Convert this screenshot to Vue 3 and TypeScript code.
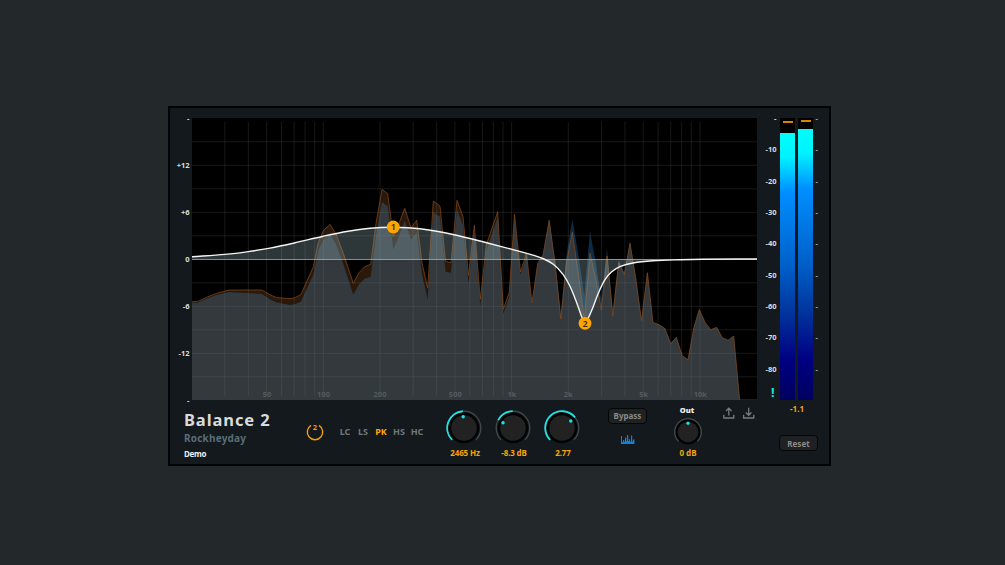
<script setup lang="ts">
type Point = [number, number]

const left = 192
const right = 757
const bottom = 400
const zeroY = 259.3

const decades = [10, 100, 1000, 10000]
const gridX = decades
  .flatMap((d) => [1, 2, 3, 4, 5, 6, 7, 8, 9].map((n) => n * d))
  .filter((f) => f > 20 && f <= 10000)
  .map((f) => 323.3 + 188.3 * Math.log10(f / 100))
const gridY = Array.from({ length: 11 }, (_, i) => 141.8 + i * 23.5)

const freqLabels = [
  { x: 267, text: '50' },
  { x: 323.5, text: '100' },
  { x: 380, text: '200' },
  { x: 455.3, text: '500' },
  { x: 512, text: '1k' },
  { x: 568.3, text: '2k' },
  { x: 643.7, text: '5k' },
  { x: 700.3, text: '10k' },
]

const curve: Point[] = [
  [191.7, 256.8], [225, 254.4], [248.3, 251.6], [270, 248.1], [295, 242.8], [323.3, 236.2],
  [348, 231.2], [370, 228.3], [393, 227.3], [420, 228.8], [453, 234.5], [486.7, 242.8],
  [516.7, 250.6], [532, 254.8], [543.3, 258.7], [553.3, 264.3], [563, 274.3], [570, 286.3],
  [576.7, 302.7], [582.2, 318], [585, 321.5], [588, 318.5], [592.5, 308.5], [598.3, 293.3],
  [605, 279.6], [611.7, 271.7], [620, 266.6], [633, 263], [653, 260.8], [680, 259.7],
  [703, 259.2], [757, 259],
]

const output: Point[] = [
  [191.7, 301.7], [197.7, 301.5], [206.7, 297.3], [216.7, 293.3], [229, 290], [261.7, 290],
  [271, 295.3], [276.7, 297.5], [290, 298.7], [295, 297.7], [301, 294.3], [313.3, 266.7],
  [318.3, 242.3], [323.3, 230.7], [330, 224.3], [336, 234], [343.3, 253.3], [353.3, 283.3],
  [359, 272.7], [364.7, 266.7], [370.7, 264.3], [376, 223.3], [382, 189.3], [387.7, 193.7],
  [393.3, 236.7], [399.3, 222.7], [404.7, 208.3], [411, 227.7], [416.7, 220.3], [422, 263],
  [427.7, 287.7], [433.3, 201], [440, 206], [445.5, 261.3], [451, 262.7], [457, 200.3],
  [463, 216.7], [468.5, 275.3], [474.3, 225.3], [480.3, 299.3], [486.3, 245], [492, 228],
  [497.7, 211.7], [503.3, 309.3], [509.3, 292.3], [514.5, 214.3], [520.5, 272], [526.5, 253.3],
  [532, 302.7], [537.7, 263.3], [543, 255], [549.2, 220.3], [555, 263], [560.8, 319],
  [566.5, 263], [572.3, 232.3], [578.5, 275], [584.3, 320], [590, 253.3], [596, 280],
  [601.3, 310], [607, 256], [612.8, 315.7], [618.7, 262.7], [624.3, 274.7], [630, 243.3],
  [635.5, 276.7], [641.5, 320.7], [647.4, 272.7], [653, 322.7], [659, 324.7], [665, 328.7],
  [670.7, 343.7], [676.3, 337.3], [682.3, 355.7], [688, 359.7], [693.7, 328.3], [699.3, 309.5],
  [705, 322.3], [710.7, 329.7], [716.7, 327.3], [722.3, 337.7], [728, 340.3], [733.7, 336],
  [739.7, 400],
]

function curveAt(x: number): number {
  const i = Math.max(1, curve.findIndex((p) => p[0] >= x))
  const [x0, y0] = curve[i - 1]
  const [x1, y1] = curve[i]
  return y0 + ((y1 - y0) * (x - x0)) / (x1 - x0)
}

function line(points: Point[]): string {
  return 'M' + points.map(([x, y]) => `${x.toFixed(1)} ${y.toFixed(1)}`).join('L')
}

function smooth(p: Point[]): string {
  let d = `M${p[0][0]} ${p[0][1]}`
  for (let i = 0; i < p.length - 1; i++) {
    const a = p[Math.max(0, i - 1)]
    const b = p[i]
    const c = p[i + 1]
    const e = p[Math.min(p.length - 1, i + 2)]
    const h = (c[0] - b[0]) / 3
    const m0 = (c[1] - a[1]) / (c[0] - a[0])
    const m1 = (e[1] - b[1]) / (e[0] - b[0])
    d += `C${b[0] + h} ${b[1] + m0 * h} ${c[0] - h} ${c[1] - m1 * h} ${c[0]} ${c[1]}`
  }
  return d
}

// The spectrum is plotted at 0.4 of the gain curve's vertical scale.
const input: Point[] = output.map(([x, y]) => [x, Math.min(bottom, y + 0.4 * (zeroY - curveAt(x)))])
const close = `L739.7 ${bottom}L${left} ${bottom}Z`
const outputArea = line(output) + close
const inputArea = line(input) + close
const curvePath = smooth(curve)
const curveArea = `${curvePath}L${right} ${zeroY}L${left} ${zeroY}Z`

const gainLabels = ['-', '+12', '+6', '0', '-6', '-12', '-']
const meterLabels = ['-', '-10', '-20', '-30', '-40', '-50', '-60', '-70', '-80', '']

const filters = ['LC', 'LS', 'PK', 'HS', 'HC']
const activeFilter = 'PK'

function polar(deg: number, r: number): string {
  const a = (deg * Math.PI) / 180
  return `${(18 + r * Math.sin(a)).toFixed(2)} ${(18 - r * Math.cos(a)).toFixed(2)}`
}
function arc(from: number, to: number, r: number): string {
  return `M${polar(from, r)}A${r} ${r} 0 ${to - from > 180 ? 1 : 0} 1 ${polar(to, r)}`
}
const knobs = [
  { label: '2465 Hz', angle: -4, dot: [17.2, 6.8] },
  { label: '-8.3 dB', angle: -62, dot: [8, 12.8], arcTo: -1 },
  { label: '2.77', angle: 51, dot: [26.8, 11] },
].map((k) => ({ ...k, from: k.arcTo === undefined ? -135 : k.angle, to: k.arcTo ?? k.angle }))
</script>

<template>
  <main class="desktop">
    <section class="panel">
      <div class="main">
        <div class="graph">
          <div class="axis gain">
            <span v-for="(l, i) in gainLabels" :key="i">{{ l }}</span>
          </div>
          <svg class="plot" viewBox="192 118 565 282" width="565" height="282">
            <defs>
              <clipPath id="outputClip"><path :d="outputArea" /></clipPath>
            </defs>
            <rect x="192" y="118" width="565" height="282" fill="#000" />
            <path :d="outputArea" fill="#2a190b" />
            <path :d="inputArea" fill="#0d2c44" />
            <path :d="inputArea" fill="#33393d" clip-path="url(#outputClip)" />
            <path :d="line(output) + 'L757 400'" class="output-line" />
            <g class="grid">
              <line v-for="x in gridX" :key="x" :x1="x" :x2="x" y1="122" y2="396" />
              <line v-for="y in gridY" :key="y" x1="192" x2="757" :y1="y" :y2="y" />
            </g>
            <text v-for="f in freqLabels" :key="f.text" :x="f.x" y="397" class="freq">{{ f.text }}</text>
            <path :d="curveArea" fill="#a5cdd2" fill-opacity=".27" />
            <line x1="192" x2="757" y1="259.5" y2="259.5" stroke="#a9b1b1" stroke-opacity=".75" />
            <path :d="curvePath" fill="none" stroke="#f4f4f4" stroke-width="1.4" />
            <circle cx="393.3" cy="227" r="6.4" fill="#ffa500" />
            <text x="393.3" y="230.3" class="node">1</text>
            <circle cx="585" cy="323.3" r="6.4" fill="#ffa500" />
            <text x="585" y="326.6" class="node">2</text>
          </svg>
        </div>

        <div class="controls">
          <div class="brand">
            <h1>Balance 2</h1>
            <h2>Rockheyday</h2>
            <p>Demo</p>
          </div>
          <svg class="band" width="18" height="18" viewBox="0 0 18 18">
            <path d="M5 2.4A7.7 7.7 0 1 0 13 2.4" fill="none" stroke="#f39c0c" stroke-width="1.4" />
            <text x="9" y="7.4">2</text>
          </svg>
          <div class="filters">
            <span v-for="f in filters" :key="f" :class="{ active: f === activeFilter }">{{ f }}</span>
          </div>
          <div class="knobs">
            <div v-for="k in knobs" :key="k.label" class="knob">
              <svg width="36" height="36" viewBox="0 0 36 36">
                <path :d="arc(-135, 135, 16.8)" class="track" />
                <path :d="arc(k.from, k.to, 16.8)" class="value" />
                <circle cx="18" cy="18" r="15.2" fill="#020303" />
                <circle cx="18" cy="18" r="12.8" fill="#222" />
                <circle :cx="k.dot[0]" :cy="k.dot[1]" r="1.7" fill="#1ee3e5" />
              </svg>
              <span>{{ k.label }}</span>
            </div>
          </div>
          <div class="bypass">
            <button>Bypass</button>
            <svg width="14" height="10" viewBox="0 0 14 10" fill="#0d83dc">
              <path d="M0 2H1V8H2V6H3.3V8H4V3.5H5.3V7H6V1H7.2V7H8V5H9V7.5H10V1.5H11.2V7.5H12V5.5H13.4V10H0Z" />
            </svg>
          </div>
          <div class="out">
            <b>Out</b>
            <svg width="28" height="28" viewBox="4 4 28 28">
              <path :d="arc(-135, 135, 13.3)" class="track" />
              <circle cx="18" cy="18" r="12.3" fill="#020303" />
              <circle cx="18" cy="18" r="10.3" fill="#222" />
              <circle cx="18" cy="9.2" r="1.6" fill="#1ee3e5" />
            </svg>
            <span>0 dB</span>
          </div>
          <svg class="files" width="32" height="12" viewBox="0 0 32 12">
            <path d="M.8 7.8V11H10.8V7.8M5.8 8.5V1.2M3 4L5.8 1.2L8.6 4" />
            <path d="M20.6 7.8V11H30.8V7.8M25.7 .8V8.3M22.9 5.5L25.7 8.3L28.5 5.5" />
          </svg>
        </div>
      </div>

      <div class="side">
        <div class="meters">
          <div class="axis level">
            <span v-for="(l, i) in meterLabels" :key="i">{{ l }}</span>
          </div>
          <div class="bar first"><i></i></div>
          <div class="bar second"><i></i></div>
          <div class="axis ticks">
            <span v-for="(l, i) in meterLabels" :key="i">{{ l ? '-' : '' }}</span>
          </div>
          <span class="alert">!</span>
        </div>
        <span class="peak">-1.1</span>
        <button class="reset">Reset</button>
      </div>
    </section>
  </main>
</template>

<style>
html,
body {
  margin: 0;
  background: #23282b;
}
</style>

<style scoped>
.desktop {
  box-sizing: border-box;
  width: 1005px;
  height: 565px;
  padding: 106px 0 0 168px;
  overflow: hidden;
  background: #23282b;
  font-family: 'Noto Sans', 'Open Sans', sans-serif;
  font-weight: 700;
  font-size: 8px;
}
.panel {
  box-sizing: border-box;
  display: flex;
  width: 663px;
  height: 360px;
  border: 2px solid #010304;
  background: #13191c;
}
.main {
  width: 587px;
}
.graph {
  display: flex;
  padding-top: 10px;
  height: 282px;
}
.plot {
  display: block;
}
.axis {
  display: flex;
  flex-direction: column;
  justify-content: space-between;
  margin: -6px 0;
  text-align: right;
  color: #ddd;
  font-size: 7.5px;
}
.axis span {
  height: 12px;
  line-height: 12px;
}
.gain {
  width: 19.5px;
  padding-right: 2.5px;
}
.output-line {
  fill: none;
  stroke: #8f4c19;
  stroke-width: 0.8;
  stroke-opacity: 0.85;
}
.grid line {
  stroke: #808080;
  stroke-opacity: 0.19;
}
.freq {
  fill: #565b5d;
  font-size: 7.5px;
  text-anchor: middle;
}
.node {
  fill: #3a2a0c;
  font-size: 9px;
  font-weight: 600;
  text-anchor: middle;
}
.controls {
  display: flex;
  height: 64px;
  padding-left: 14px;
}
.brand {
  width: 122px;
}
h1,
h2,
p {
  margin: 0;
  white-space: nowrap;
}
h1 {
  padding-top: 9px;
  font-size: 16.5px;
  line-height: 22px;
  letter-spacing: 0.9px;
  color: #dadada;
}
h2 {
  margin-top: 1px;
  font-size: 10px;
  line-height: 13px;
  letter-spacing: 0.2px;
  color: #596d78;
}
p {
  margin-top: 3px;
  font-size: 8px;
  line-height: 12px;
  letter-spacing: -0.3px;
  color: #eee;
}
.band {
  margin-top: 23px;
}
.band text {
  fill: #f39c0c;
  font-size: 7.5px;
  text-anchor: middle;
}
.filters {
  display: flex;
  margin: 26px 0 0 12px;
  height: 12px;
  line-height: 12px;
  font-size: 9px;
  color: #70777b;
}
.filters span {
  width: 18px;
  text-align: center;
}
.filters .active {
  color: #ffa500;
}
.knobs {
  display: flex;
  gap: 13px;
  margin: 10px 0 0 20px;
}
.knob {
  display: flex;
  flex-direction: column;
  align-items: center;
  width: 36px;
}
.knob span,
.out span {
  color: #f7a30c;
  line-height: 12px;
  white-space: nowrap;
}
.knob span {
  margin: 1px 0 0 2px;
  letter-spacing: -0.15px;
}
.track,
.value {
  fill: none;
  stroke: #44494c;
  stroke-width: 1.3;
}
.value {
  stroke: #1ee3e5;
  stroke-width: 1.8;
}
button {
  box-sizing: border-box;
  padding: 0;
  border: 1px solid #050606;
  border-radius: 4px;
  background: #202122;
  color: #8a8a8a;
  font: inherit;
}
.bypass {
  display: flex;
  flex-direction: column;
  align-items: center;
  margin: 8px 0 0 28px;
}
.bypass button {
  width: 39px;
  height: 16px;
  line-height: 12px;
  padding-bottom: 1px;
}
.bypass svg {
  margin: 10px 0 0 1px;
}
.out {
  display: flex;
  flex-direction: column;
  align-items: center;
  width: 30px;
  margin: 4px 0 0 26px;
  color: #eee;
}
.out b {
  margin-right: 2px;
  line-height: 12px;
  font-size: 7.5px;
}
.out svg {
  margin-top: 2px;
}
.out span {
  margin-top: 1px;
}
.files {
  margin: 7px 0 0 20px;
  fill: none;
  stroke: #777b7d;
  stroke-width: 1.3;
}
.side {
  display: flex;
  flex-direction: column;
  width: 72px;
}
.meters {
  position: relative;
  display: flex;
  padding-top: 10px;
  height: 282px;
}
.level {
  width: 19.5px;
  padding-right: 3.5px;
}
.bar {
  width: 15px;
  padding-top: 14.5px;
  box-sizing: border-box;
  background: linear-gradient(#d88400, #d88400) center 3px / 10px 2px no-repeat #000;
}
.bar i {
  display: block;
  height: 100%;
  background: linear-gradient(#00fff9 0, #00f2ff 9%, #008fff 22%, #005fc8 50%, #00339b 68%, #000082 85%, #00005f 100%);
}
.second {
  margin-left: 3px;
  padding-top: 11px;
  background-position: center 2px;
}
.ticks {
  width: 5px;
  color: #a3a8aa;
}
.alert {
  position: absolute;
  left: 14px;
  bottom: 0;
  color: #17e0e0;
  font-size: 13px;
  line-height: 16px;
}
.peak {
  margin: 3px 0 0 33px;
  line-height: 12px;
  color: #f7a30c;
}
.reset {
  width: 39px;
  height: 16px;
  margin: 20px 0 0 22px;
}
</style>
